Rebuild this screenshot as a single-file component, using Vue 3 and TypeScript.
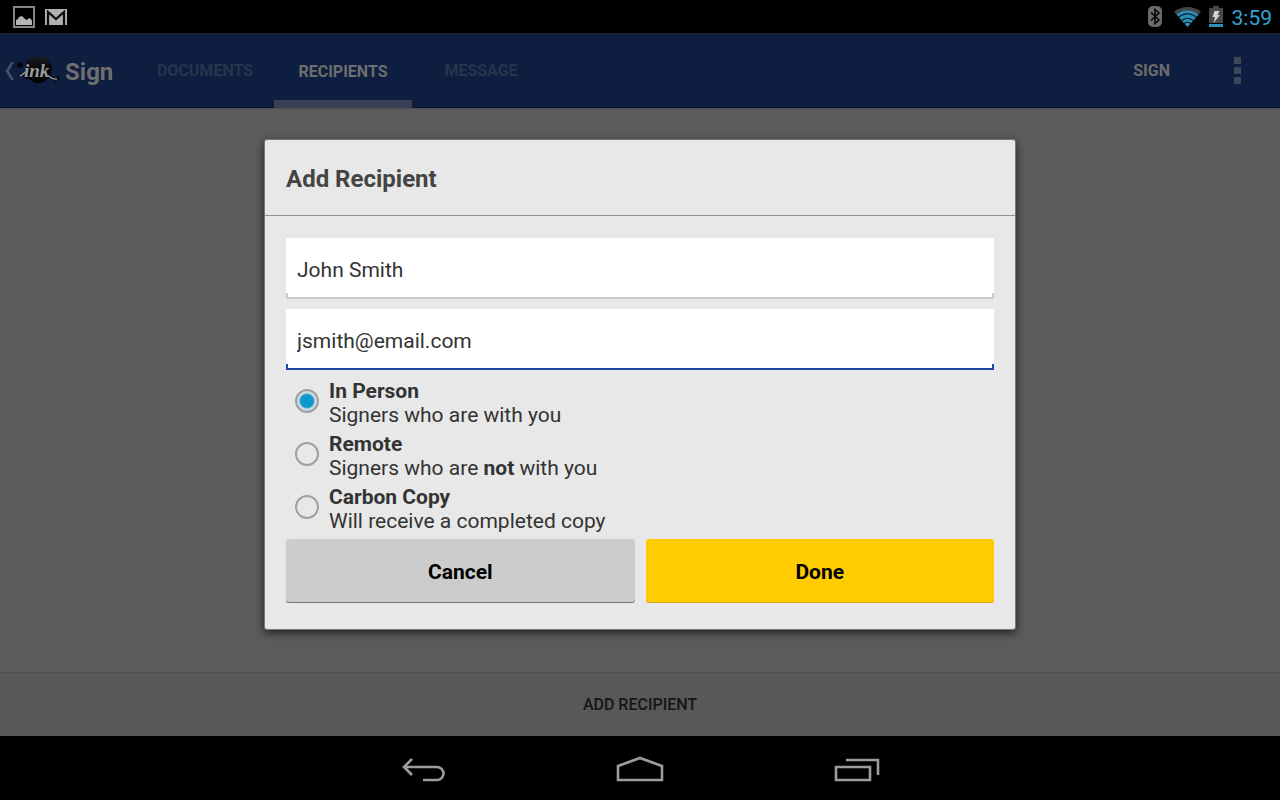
<script setup lang="ts">
import { ref } from 'vue'

interface RecipientKind {
  id: string
  title: string
  before: string
  strong?: string
  after?: string
}

const tabs = ['Documents', 'Recipients', 'Message']
const activeTab = ref('Recipients')

const kinds: RecipientKind[] = [
  { id: 'in-person', title: 'In Person', before: 'Signers who are with you' },
  { id: 'remote', title: 'Remote', before: 'Signers who are ', strong: 'not', after: ' with you' },
  { id: 'copy', title: 'Carbon Copy', before: 'Will receive a completed copy' },
]

const name = ref('John Smith')
const email = ref('jsmith@email.com')
const kind = ref('in-person')
</script>

<template>
  <div class="screen">
    <div class="status">
      <div class="status-group">
        <svg width="22" height="22" viewBox="0 0 22 22" aria-hidden="true">
          <rect x="1" y="1" width="20" height="20" fill="none" stroke="#858585" stroke-width="2" />
          <path d="M3 19v-5l2-1 1-2 3-1 3 3 2 1 2-2 2 1 1 2v4z" fill="#b5b5b5" />
        </svg>
        <svg width="22" height="16" viewBox="0 0 22 16" aria-hidden="true">
          <rect width="22" height="16" fill="#b2b2b2" />
          <path d="M3 16V3l8 7 8-7v13" fill="none" stroke="#0b0b0b" stroke-width="2.2" />
        </svg>
      </div>
      <div class="status-group right">
        <svg width="14" height="21" viewBox="0 0 14 21" aria-hidden="true">
          <rect width="14" height="21" rx="5" fill="#6a6a6a" />
          <path d="M3 6.500l8 7.500-4 3.500v-14l4 3.500-8 7.500" fill="none" stroke="#080808" stroke-width="1.600" />
        </svg>
        <svg class="wifi" width="27" height="20" viewBox="0 0 27 20" aria-hidden="true">
          <path d="M0 4.500Q13.500-4.500 27 4.500L13.500 20z" fill="#454545" />
          <path d="M2.500 7.400Q13.500-.4 24.500 7.400L13.500 20z" fill="#2a8fb8" />
          <path d="M4 10.400Q13.500 3 23 10.400M7 14Q13.500 8.500 20 14M9.500 17Q13.500 13.500 17.500 17" fill="none" stroke="#06141b" stroke-width="1.100" />
        </svg>
        <svg width="14" height="21" viewBox="0 0 14 21" aria-hidden="true">
          <path d="M4 0h6v2h4v15H0V2h4z" fill="#484848" />
          <path d="M0 18h14v3H0z" fill="#2a8fb8" />
          <path d="M5.500 5h5L8.500 9h2.500L4.500 17l1.500-6H3.500z" fill="#d5d5d5" />
        </svg>
        <span class="clock">3:59</span>
      </div>
    </div>

    <div class="app">
      <header class="bar">
        <button class="up" type="button" aria-label="Navigate up">
          <svg width="57" height="30" viewBox="0 0 57 30" aria-hidden="true">
            <defs>
              <linearGradient id="blot" x1="0" y1="0" x2="0" y2="1">
                <stop offset="0" stop-color="#1a1c20" />
                <stop offset=".5" stop-color="#030406" />
              </linearGradient>
            </defs>
            <path d="M10 6L5 15l5 9H7L1.500 15 7 6z" fill="#434f66" />
            <circle cx="16" cy="9" r="3" fill="#05080e" />
            <path d="M23 5c3-5 17-6 22 0 4 4 3 7 2 11-1 3 2 5 4 6-4 0-6-1-8 1-2 4-7 5-12 4-3-1-5-4-7-4-3 0-6-2-6-4 1-4 4-4 4-7 0-2-1-4 1-7z" fill="url(#blot)" />
            <circle cx="54" cy="22" r="2" fill="#05080e" />
            <circle cx="51" cy="26" r="1" fill="#05080e" />
            <text x="20" y="21" class="mark">ink</text>
            <path d="M16 20q3-1 5-4M44 20c2 0 4 4 9 3" fill="none" stroke="#909294" stroke-width="1.400" />
          </svg>
          <span class="app-name">Sign</span>
        </button>
        <nav class="tabs">
          <button
            v-for="tab in tabs"
            :key="tab"
            type="button"
            class="tab"
            :class="{ active: tab === activeTab }"
            @click="activeTab = tab"
          >{{ tab }}</button>
        </nav>
        <button class="sign" type="button">Sign</button>
        <button class="more" type="button" aria-label="More options">
          <i></i><i></i><i></i>
        </button>
      </header>

      <main class="content"></main>

      <footer class="bottom">
        <button class="add" type="button">Add Recipient</button>
      </footer>

      <div class="overlay">
        <form class="dialog" role="dialog" aria-labelledby="dialog-title" @submit.prevent>
          <h2 id="dialog-title" class="title">Add Recipient</h2>
          <div class="body">
            <input v-model="name" class="field" type="text" aria-label="Name" />
            <input v-model="email" class="field focused" type="email" aria-label="Email" />
            <div class="kinds" role="radiogroup" aria-label="Recipient type">
              <label v-for="item in kinds" :key="item.id" class="kind" :for="item.id">
                <input :id="item.id" v-model="kind" class="radio" type="radio" name="kind" :value="item.id" />
                <span>
                  <b>{{ item.title }}</b><br />{{ item.before }}<b v-if="item.strong">{{ item.strong }}</b>{{ item.after }}
                </span>
              </label>
            </div>
            <div class="actions">
              <button class="action" type="button">Cancel</button>
              <button class="action done" type="submit">Done</button>
            </div>
          </div>
        </form>
      </div>
    </div>

    <nav class="system">
      <button type="button" aria-label="Back">
        <svg width="48" height="28" viewBox="0 0 48 28" fill="none" stroke="#9c9c9c" stroke-width="2.600" aria-hidden="true">
          <path d="M13 3L5 11l8 8M5 11h33a6.500 6.500 0 0 1 0 13H24" />
        </svg>
      </button>
      <button type="button" aria-label="Home">
        <svg width="48" height="28" viewBox="0 0 48 28" fill="none" stroke="#9c9c9c" stroke-width="2.600" aria-hidden="true">
          <path d="M2 24V10L24 2l22 8v14z" />
        </svg>
      </button>
      <button type="button" aria-label="Recent apps">
        <svg width="48" height="28" viewBox="0 0 48 28" fill="none" stroke="#9c9c9c" stroke-width="2.600" aria-hidden="true">
          <path d="M3 11h34v13H3zM13 4h32v15" />
        </svg>
      </button>
    </nav>
  </div>
</template>

<style>
body {
  margin: 0;
  background: #000;
}
</style>

<style scoped>
.screen {
  display: flex;
  flex-direction: column;
  min-height: 100vh;
  background: #000;
  color: #333;
  font-family: Roboto, "Liberation Sans", sans-serif;
}

button {
  margin: 0;
  padding: 0;
  border: 0;
  background: none;
  color: inherit;
  font: inherit;
}

svg {
  display: block;
}

.status {
  display: flex;
  justify-content: space-between;
  align-items: center;
  height: 33px;
  padding: 0 8px 0 13px;
}

.status-group {
  display: flex;
  align-items: center;
  gap: 10px;
}

.status-group.right {
  gap: 8px;
}

.wifi {
  margin-left: 4px;
}

.clock {
  margin-left: 1px;
  color: #33a5d3;
  font-size: 21px;
  line-height: 24px;
  padding-top: 2px;
}

.app {
  position: relative;
  flex: 1;
  display: flex;
  flex-direction: column;
  background: #5c5c5c;
}

.bar {
  display: flex;
  align-items: stretch;
  height: 75px;
  box-sizing: border-box;
  border-top: 1px solid #1a2436;
  border-bottom: 1px solid #06122b;
  background: #0d1e40;
  color: #6c6c6c;
  font-size: 16px;
  font-weight: 700;
  box-shadow: 0 1px 1px #505050;
}

.up {
  display: flex;
  align-items: center;
  gap: 4px;
  width: 136px;
  padding-left: 4px;
  box-sizing: border-box;
}

.mark {
  fill: #9a9c9e;
  font: italic 700 19px "Liberation Serif", serif;
}

.app-name {
  font-size: 24px;
  color: #6e6e6e;
  padding-top: 2px;
}

.tabs {
  display: flex;
}

.tab {
  min-width: 138px;
  box-sizing: border-box;
  padding: 0 20px;
  color: #27344d;
  text-transform: uppercase;
}

.tab.active {
  margin-bottom: -1px;
  color: #6e6e6e;
  background: linear-gradient(#394055, #394055) bottom / 100% 8px no-repeat;
}

.sign {
  margin: 0 0 0 auto;
  padding: 0 24px;
  text-transform: uppercase;
  background: linear-gradient(#0b1936, #0b1936) right center / 1px 40px no-repeat;
}

.more {
  display: flex;
  flex-direction: column;
  justify-content: center;
  align-items: center;
  gap: 3px;
  width: 86px;
}

.more i {
  width: 7px;
  height: 7px;
  background: #3e4759;
}

.content {
  flex: 1;
}

.bottom {
  display: flex;
  height: 64px;
  box-sizing: border-box;
  border-top: 1px solid #4f4f4f;
  background: #585858;
}

.add {
  flex: 1;
  color: #151515;
  font-size: 16px;
  font-weight: 500;
  text-transform: uppercase;
}

.overlay {
  position: absolute;
  inset: 0;
  display: flex;
  align-items: center;
  justify-content: center;
}

.dialog {
  width: 750px;
  max-width: 100%;
  border-radius: 2px;
  background: #e8e8e8;
  box-shadow: 0 0 0 1px #777, 0 3px 8px 1px rgba(0, 0, 0, 0.65);
}

.title {
  margin: 0;
  padding: 25px 21px 22px;
  border-bottom: 1px solid #929292;
  color: #444;
  font-size: 24px;
  line-height: 28px;
  font-weight: 700;
}

.body {
  display: flex;
  flex-direction: column;
  gap: 10px;
  padding: 22px 21px 26px;
  font-size: 21px;
  line-height: 24px;
}

.field {
  --line: #ccc;
  width: 100%;
  height: 61px;
  box-sizing: border-box;
  padding: 2px 11px 0;
  border: 0;
  border-radius: 0;
  outline: 0;
  background:
    linear-gradient(var(--line), var(--line)) left bottom / 100% 2px no-repeat,
    linear-gradient(var(--line), var(--line)) left bottom / 2px 6px no-repeat,
    linear-gradient(var(--line), var(--line)) right bottom / 2px 6px no-repeat,
    #fff;
  color: #333;
  font: inherit;
}

.field.focused {
  --line: #214a9e;
}

.kinds {
  display: flex;
  flex-direction: column;
  gap: 5px;
  margin: -1px 0 -4px;
}

.kind {
  display: flex;
  align-items: flex-start;
  gap: 10px;
  padding-left: 9px;
}

.radio {
  flex: none;
  appearance: none;
  width: 24px;
  height: 24px;
  margin: 10px 0 0;
  border: 2px solid #a0a0a0;
  border-radius: 50%;
}

.radio:checked {
  background: radial-gradient(circle, #0d98cc 0 6px, #55a5c4 7px, #c8dde6 8px);
}

.actions {
  display: flex;
  gap: 11px;
}

.action {
  flex: 1;
  height: 64px;
  padding-top: 2px;
  border-radius: 3px;
  background: #ccc;
  box-shadow: inset 0 -1px 0 #777;
  color: #000;
  font-weight: 700;
}

.action.done {
  background: #fc0;
  box-shadow: inset 0 -1px 0 #d9a520;
}

.system {
  display: flex;
  justify-content: center;
  align-items: center;
  gap: 169px;
  height: 64px;
  box-sizing: border-box;
  padding-top: 3px;
}
</style>
